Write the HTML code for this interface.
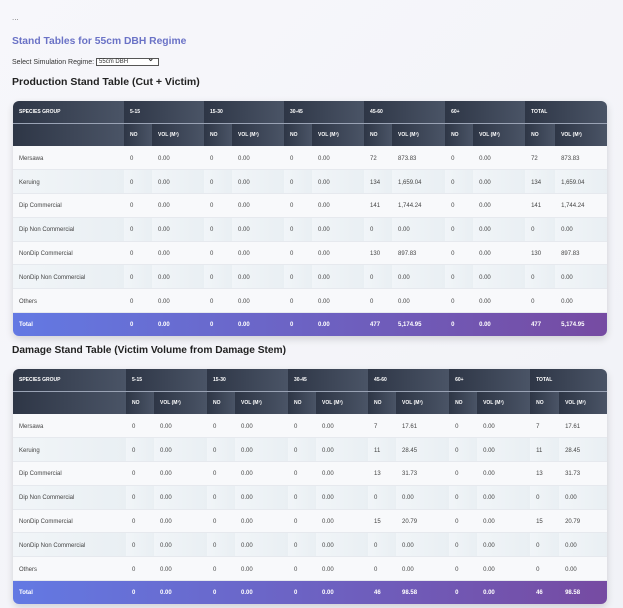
<!DOCTYPE html>
<html><head><meta charset="utf-8"><style>
*{margin:0;padding:0;box-sizing:border-box}
body{width:623px;height:608px;overflow:hidden;background:linear-gradient(135deg,#f7f7fb,#f1f2f7);font-family:"Liberation Sans",sans-serif;color:#333;position:relative}
.abs{position:absolute}
.dots{left:12px;top:13px;font-size:8px;color:#777}
.sel{left:12px;top:58px;font-size:7px;color:#333}
.sel span.box{display:inline-block;width:63px;height:8px;border:1px solid #555;background:#fff;font-size:6px;vertical-align:middle;position:relative;padding-left:2px;line-height:6px}
.sel span.box:after{content:"⌄";position:absolute;right:4px;top:-3px;font-size:8px;font-weight:bold}
h2{left:12px;color:#222;font-weight:bold}
table{position:absolute;left:13px;width:594px;border-collapse:collapse;table-layout:fixed;border-radius:6px;overflow:hidden;box-shadow:0 3px 8px rgba(0,0,0,.15);font-size:6px}
th{background:linear-gradient(90deg,#2e3646,#4a5466);color:#fff;text-align:left;padding-left:6px;font-weight:bold;font-size:5px}
tr.h1 th{height:22px;border-bottom:1px solid #9aa3b5}
tr.h2 th{height:23px}
td{padding-left:6px;height:23.8px;color:#444;padding-top:2px}
tr.a td{background:#f8f9fb}
tr.b td{background:linear-gradient(90deg,#f1f5f8,#e9eff3)}
tr.b td,tr.a td{border-bottom:1px solid #e6e9ee}
tr.t td{background:transparent;color:#fff;font-weight:bold;height:23px}
tr.t{background:linear-gradient(90deg,#6379e3,#764ba2)}
</style></head><body>
<div class="abs dots">...</div>
<div class="abs" style="left:12px;top:36px"><h1 style="font-size:10.3px;color:#6a72c6">Stand Tables for 55cm DBH Regime</h1></div>
<div class="abs sel">Select Simulation Regime: <span class="box">55cm DBH</span></div>
<h2 class="abs" style="top:76px;font-size:10.5px">Production Stand Table (Cut + Victim)</h2>

<table style="top:101px">
<colgroup><col style="width:111px"><col style="width:28px"><col style="width:52px"><col style="width:28px"><col style="width:52px"><col style="width:28px"><col style="width:52px"><col style="width:28px"><col style="width:53px"><col style="width:28px"><col style="width:52px"><col style="width:30px"><col style="width:52px"></colgroup>
<tr class="h1"><th>SPECIES GROUP</th><th colspan="2">5-15</th><th colspan="2">15-30</th><th colspan="2">30-45</th><th colspan="2">45-60</th><th colspan="2">60+</th><th colspan="2">TOTAL</th></tr>
<tr class="h2"><th></th><th>NO</th><th>VOL (M³)</th><th>NO</th><th>VOL (M³)</th><th>NO</th><th>VOL (M³)</th><th>NO</th><th>VOL (M³)</th><th>NO</th><th>VOL (M³)</th><th>NO</th><th>VOL (M³)</th></tr>
<tr class="a"><td>Mersawa</td><td>0</td><td>0.00</td><td>0</td><td>0.00</td><td>0</td><td>0.00</td><td>72</td><td>873.83</td><td>0</td><td>0.00</td><td>72</td><td>873.83</td></tr>
<tr class="b"><td>Keruing</td><td>0</td><td>0.00</td><td>0</td><td>0.00</td><td>0</td><td>0.00</td><td>134</td><td>1,659.04</td><td>0</td><td>0.00</td><td>134</td><td>1,659.04</td></tr>
<tr class="a"><td>Dip Commercial</td><td>0</td><td>0.00</td><td>0</td><td>0.00</td><td>0</td><td>0.00</td><td>141</td><td>1,744.24</td><td>0</td><td>0.00</td><td>141</td><td>1,744.24</td></tr>
<tr class="b"><td>Dip Non Commercial</td><td>0</td><td>0.00</td><td>0</td><td>0.00</td><td>0</td><td>0.00</td><td>0</td><td>0.00</td><td>0</td><td>0.00</td><td>0</td><td>0.00</td></tr>
<tr class="a"><td>NonDip Commercial</td><td>0</td><td>0.00</td><td>0</td><td>0.00</td><td>0</td><td>0.00</td><td>130</td><td>897.83</td><td>0</td><td>0.00</td><td>130</td><td>897.83</td></tr>
<tr class="b"><td>NonDip Non Commercial</td><td>0</td><td>0.00</td><td>0</td><td>0.00</td><td>0</td><td>0.00</td><td>0</td><td>0.00</td><td>0</td><td>0.00</td><td>0</td><td>0.00</td></tr>
<tr class="a"><td>Others</td><td>0</td><td>0.00</td><td>0</td><td>0.00</td><td>0</td><td>0.00</td><td>0</td><td>0.00</td><td>0</td><td>0.00</td><td>0</td><td>0.00</td></tr>
<tr class="t"><td>Total</td><td>0</td><td>0.00</td><td>0</td><td>0.00</td><td>0</td><td>0.00</td><td>477</td><td>5,174.95</td><td>0</td><td>0.00</td><td>477</td><td>5,174.95</td></tr>
</table>

<h2 class="abs" style="top:345px;font-size:10.2px">Damage Stand Table (Victim Volume from Damage Stem)</h2>

<table style="top:369px">
<colgroup><col style="width:113px"><col style="width:28px"><col style="width:53px"><col style="width:28px"><col style="width:53px"><col style="width:28px"><col style="width:52px"><col style="width:28px"><col style="width:53px"><col style="width:28px"><col style="width:53px"><col style="width:29px"><col style="width:48px"></colgroup>
<tr class="h1"><th>SPECIES GROUP</th><th colspan="2">5-15</th><th colspan="2">15-30</th><th colspan="2">30-45</th><th colspan="2">45-60</th><th colspan="2">60+</th><th colspan="2">TOTAL</th></tr>
<tr class="h2"><th></th><th>NO</th><th>VOL (M³)</th><th>NO</th><th>VOL (M³)</th><th>NO</th><th>VOL (M³)</th><th>NO</th><th>VOL (M³)</th><th>NO</th><th>VOL (M³)</th><th>NO</th><th>VOL (M³)</th></tr>
<tr class="a"><td>Mersawa</td><td>0</td><td>0.00</td><td>0</td><td>0.00</td><td>0</td><td>0.00</td><td>7</td><td>17.61</td><td>0</td><td>0.00</td><td>7</td><td>17.61</td></tr>
<tr class="b"><td>Keruing</td><td>0</td><td>0.00</td><td>0</td><td>0.00</td><td>0</td><td>0.00</td><td>11</td><td>28.45</td><td>0</td><td>0.00</td><td>11</td><td>28.45</td></tr>
<tr class="a"><td>Dip Commercial</td><td>0</td><td>0.00</td><td>0</td><td>0.00</td><td>0</td><td>0.00</td><td>13</td><td>31.73</td><td>0</td><td>0.00</td><td>13</td><td>31.73</td></tr>
<tr class="b"><td>Dip Non Commercial</td><td>0</td><td>0.00</td><td>0</td><td>0.00</td><td>0</td><td>0.00</td><td>0</td><td>0.00</td><td>0</td><td>0.00</td><td>0</td><td>0.00</td></tr>
<tr class="a"><td>NonDip Commercial</td><td>0</td><td>0.00</td><td>0</td><td>0.00</td><td>0</td><td>0.00</td><td>15</td><td>20.79</td><td>0</td><td>0.00</td><td>15</td><td>20.79</td></tr>
<tr class="b"><td>NonDip Non Commercial</td><td>0</td><td>0.00</td><td>0</td><td>0.00</td><td>0</td><td>0.00</td><td>0</td><td>0.00</td><td>0</td><td>0.00</td><td>0</td><td>0.00</td></tr>
<tr class="a"><td>Others</td><td>0</td><td>0.00</td><td>0</td><td>0.00</td><td>0</td><td>0.00</td><td>0</td><td>0.00</td><td>0</td><td>0.00</td><td>0</td><td>0.00</td></tr>
<tr class="t"><td>Total</td><td>0</td><td>0.00</td><td>0</td><td>0.00</td><td>0</td><td>0.00</td><td>46</td><td>98.58</td><td>0</td><td>0.00</td><td>46</td><td>98.58</td></tr>
</table>
</body></html>
